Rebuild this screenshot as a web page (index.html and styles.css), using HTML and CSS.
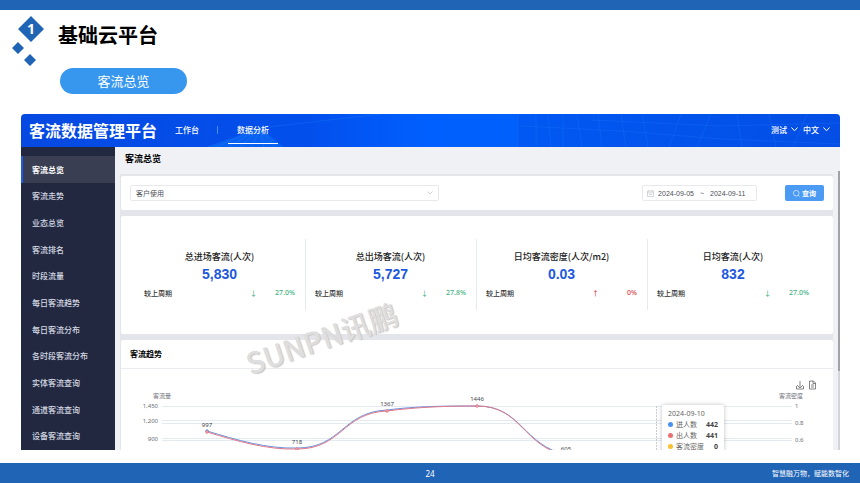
FILE: index.html
```html
<!DOCTYPE html>
<html lang="zh-CN">
<head>
    <meta charset="UTF-8">
    <meta name="viewport" content="width=device-width, initial-scale=1.0">
    <title>基础云平台 - 客流总览</title>
    <link rel="stylesheet" href="styles.css">
</head>
<body>

<header class="slide-header">
    <div class="heading">
        <svg class="diamonds" width="34" height="52" viewBox="0 0 34 52">
            <path d="M20 0L33 13L20 26L7 13Z M7 26L13 32L7 38L1 32Z M19 38L25 44L19 50L13 44Z" fill="#2064b6"/>
            <text x="20" y="18" text-anchor="middle">1</text>
        </svg>
        <h1>基础云平台</h1>
    </div>
    <h2 class="pill">客流总览</h2>
</header>

<div class="app">
    <header class="topbar">
        <svg class="topbar-bg" viewBox="0 0 819 33" preserveAspectRatio="none" aria-hidden="true">
            <path d="M185 33L239 14L263 33Z" fill="#1686ff" opacity=".35"/>
            <path d="M195 33L239 14M207 33L239 14M219 33L239 14M231 33L239 14M243 33L239 14M254 33L239 14M239 14L360 0" stroke="#45b0ff" stroke-width=".5" opacity=".3"/>
            <path d="M497 0H819V33H497Z" fill="#0344d8" opacity=".25"/>
            <path d="M497 0V33M515 0V33M527 0L530 33M542 0V33M556 0L561 33M577 0L581 33M600 0L605 33M621 0L627 33M660 0L648 33M690 0L676 33M716 0L721 33M748 0L755 33M786 0L772 33M500 12L600 17L700 25L819 30M570 6L700 12L819 9" fill="none" stroke="#2f87ff" stroke-width=".6" opacity=".35"/>
        </svg>
        <div class="logo">客流数据管理平台</div>
        <nav class="tabs">
            <a href="#">工作台</a>
            <span class="tab-divider"></span>
            <a href="#" class="active">数据分析</a>
        </nav>
        <div class="user-menu">
            <button type="button">测试 <svg width="7" height="5" viewBox="0 0 7 5"><path d="M.5 .5L3.5 3.8L6.5 .5"/></svg></button>
            <button type="button">中文 <svg width="7" height="5" viewBox="0 0 7 5"><path d="M.5 .5L3.5 3.8L6.5 .5"/></svg></button>
        </div>
    </header>

    <div class="app-body">
        <nav class="sidebar">
            <a href="#" class="active">客流总览</a>
            <a href="#">客流走势</a>
            <a href="#">业态总览</a>
            <a href="#">客流排名</a>
            <a href="#">时段流量</a>
            <a href="#">每日客流趋势</a>
            <a href="#">每日客流分布</a>
            <a href="#">各时段客流分布</a>
            <a href="#">实体客流查询</a>
            <a href="#">通道客流查询</a>
            <a href="#">设备客流查询</a>
        </nav>

        <main class="content">
            <h3 class="page-title">客流总览</h3>

            <div class="cards">
                <form class="card filter">
                    <div class="select-wrap">
                        <select aria-label="客户">
                            <option>客户使用</option>
                        </select>
                        <svg width="6" height="4" viewBox="0 0 6 4"><path d="M.5 .5L3 3L5.5 .5" fill="none" stroke="#b9bdc5" stroke-width=".7"/></svg>
                    </div>
                    <div class="date-range">
                        <svg width="7" height="7" viewBox="0 0 7 7"><path d="M.5 1H6.5V6.5H.5ZM.5 2.8H6.5M2 0V1.8M5 0V1.8M2 4.5H5" fill="none" stroke="#b9bdc5" stroke-width=".6"/></svg>
                        <input type="text" value="2024-09-05" aria-label="开始日期">
                        <span>~</span>
                        <input type="text" value="2024-09-11" aria-label="结束日期">
                    </div>
                    <button type="button" class="btn-query">
                        <svg width="7" height="7" viewBox="0 0 7 7"><path d="M5.3 5.3L6.6 6.6M6 3.2A2.8 2.8 0 1 1 .4 3.2A2.8 2.8 0 1 1 6 3.2Z" fill="none" stroke="#fff" stroke-width=".6"/></svg>
                        查询
                    </button>
                </form>

                <section class="card stats">
                    <div class="stat">
                        <div class="stat-label">总进场客流(人次)</div>
                        <div class="stat-value">5,830</div>
                        <div class="stat-compare"><span>较上周期</span><span class="down">↓</span><span class="rate down">27.0%</span></div>
                    </div>
                    <div class="stat">
                        <div class="stat-label">总出场客流(人次)</div>
                        <div class="stat-value">5,727</div>
                        <div class="stat-compare"><span>较上周期</span><span class="down">↓</span><span class="rate down">27.8%</span></div>
                    </div>
                    <div class="stat">
                        <div class="stat-label">日均客流密度(人次/m2)</div>
                        <div class="stat-value">0.03</div>
                        <div class="stat-compare"><span>较上周期</span><span class="up">↑</span><span class="rate up">0%</span></div>
                    </div>
                    <div class="stat">
                        <div class="stat-label">日均客流(人次)</div>
                        <div class="stat-value">832</div>
                        <div class="stat-compare"><span>较上周期</span><span class="down">↓</span><span class="rate down">27.0%</span></div>
                    </div>
                </section>

                <section class="card trend">
                    <h3>客流趋势</h3>
                    <div class="chart">
                        <svg class="plot" viewBox="0 0 712 100">
                            <g class="grid">
                                <path d="M41 37.5H671M41 51.5H671M41 54.5H671M41 69.5H671M41 71.5H671"/>
                            </g>
                            <path class="pointer" d="M535.5 37V100"/>
                            <g class="axis">
                                <text x="41" y="29" text-anchor="middle">客流量</text>
                                <text x="37" y="39" text-anchor="end">1,450</text>
                                <text x="37" y="54" text-anchor="end">1,200</text>
                                <text x="37" y="72" text-anchor="end">900</text>
                                <text x="670" y="29" text-anchor="middle">客流密度</text>
                                <text x="674" y="39">1</text>
                                <text x="674" y="56">0.8</text>
                                <text x="674" y="73">0.6</text>
                            </g>
                            <path class="line in" d="M86 62C116 71 146 80 176 79C221 79 221 43 266 41C296 37 326 37 356 37C401 37 401 76 446 86"/>
                            <path class="line out" d="M86 63C116 72 146 81 176 80C221 80 221 44 266 42C296 38 326 37 356 37C401 37 401 77 446 87"/>
                            <g class="dots">
                                <circle class="in" cx="86" cy="62" r="1.2"/>
                                <circle cx="86" cy="63" r="1.2"/>
                                <circle cx="176" cy="80" r="1.2"/>
                                <circle cx="266" cy="42" r="1.2"/>
                                <circle cx="356" cy="37" r="1.2"/>
                            </g>
                            <g class="values">
                                <text x="86" y="58">997</text>
                                <text x="176" y="75">718</text>
                                <text x="266" y="37">1367</text>
                                <text x="356" y="32">1446</text>
                                <text x="445" y="82">605</text>
                            </g>
                            <g class="tools">
                                <path d="M679 12V18M676 16L679 19L682 16M675.500 17V20H682.500V17"/>
                                <path d="M688.500 12H692.500L694.500 14V20H688.500ZM692 12V14.500H694.500M690 16H693M690 18H693"/>
                            </g>
                        </svg>
                        <div class="tooltip">
                            <div class="tooltip-date">2024-09-10</div>
                            <div class="tooltip-row"><i class="blue"></i>进人数<b>442</b></div>
                            <div class="tooltip-row"><i class="red"></i>出人数<b>441</b></div>
                            <div class="tooltip-row"><i class="yellow"></i>客流密度<b>0</b></div>
                        </div>
                    </div>
                </section>
            </div>
            <div class="scrollbar"></div>
        </main>
    </div>
    <div class="watermark">SUNPN讯鹏</div>
</div>

<footer class="slide-footer">
    <span class="page-no">24</span>
    <span class="slogan">智慧融万物，赋能数智化</span>
</footer>

</body>
</html>
```

FILE: styles.css
```css
* {
    box-sizing: border-box;
}

body {
    margin: 0;
    height: 100vh;
    display: flex;
    flex-direction: column;
    border-top: 10px solid #2064b6;
    background-color: #fff;
    font-family: "Noto Sans CJK SC", sans-serif;
    overflow: hidden;
}

h1, h2, h3 {
    margin: 0;
}

a {
    color: inherit;
    text-decoration: none;
}

button, input, select {
    font-family: inherit;
    margin: 0;
    padding: 0;
    border: none;
    background: none;
}

/* slide header */
.slide-header {
    padding: 6px 11px 0;
}

.heading {
    display: flex;
    gap: 13px;
    height: 52px;
}

.diamonds text {
    fill: #fff;
    font-family: "Noto Sans", sans-serif;
    font-size: 14px;
    font-weight: bold;
}

.heading h1 {
    font-size: 20px;
    line-height: 38px;
}

.pill {
    width: 127px;
    margin-left: 49px;
    border-radius: 13px;
    background-color: #3797ef;
    color: #fff;
    font-size: 13px;
    font-weight: normal;
    line-height: 26px;
    text-align: center;
}

/* application window */
.app {
    position: relative;
    flex: 1;
    min-height: 0;
    display: flex;
    flex-direction: column;
    margin: 20px 20px 13px 21px;
    border-radius: 4px 4px 0 0;
    overflow: hidden;
}

.topbar {
    position: relative;
    flex: none;
    display: flex;
    align-items: center;
    height: 33px;
    padding: 0 10px 2px 8px;
    background: linear-gradient(90deg, #0649e2, #0450ec 35%, #0060ff 50%, #0060fc 60%, #0452ea);
    color: #fff;
}

.topbar-bg {
    position: absolute;
    inset: 0;
    width: 100%;
    height: 100%;
}

.logo {
    position: relative;
    font-size: 16px;
    font-weight: bold;
}

.tabs {
    position: relative;
    flex: 1;
    display: flex;
    align-items: center;
    height: 100%;
    margin-left: 18px;
    font-size: 8px;
    font-weight: 500;
}

.tabs a {
    height: 28px;
    line-height: 28px;
}

.tabs .active {
    padding: 0 9px;
    border-bottom: 1px solid #fff;
}

.tab-divider {
    width: 1px;
    height: 8px;
    margin: 0 10px 0 18px;
    background-color: #4c8cff;
}

.user-menu {
    position: relative;
    display: flex;
    gap: 5px;
}

.user-menu button {
    display: flex;
    align-items: center;
    gap: 4px;
    color: #fff;
    font-size: 8px;
    font-weight: 500;
}

.user-menu path {
    fill: none;
    stroke: #fff;
}

.app-body {
    flex: 1;
    min-height: 0;
    display: flex;
}

.sidebar {
    flex: none;
    display: flex;
    flex-direction: column;
    width: 94px;
    padding: 9px 0 1px;
    background-color: #222840;
    color: #d3d8e0;
    font-size: 8px;
    font-weight: 500;
}

.sidebar a {
    flex: 1;
    display: flex;
    align-items: center;
    padding-left: 9px;
    border-left: 2px solid transparent;
}

.sidebar .active {
    border-color: #1f5be0;
    background-color: #393e52;
    color: #fff;
    font-weight: bold;
}

.content {
    position: relative;
    flex: 1;
    min-width: 0;
    background-color: #eff1f5;
}

.page-title {
    padding: 0 10px;
    font-size: 9px;
    line-height: 24px;
}

.cards {
    display: flex;
    flex-direction: column;
    gap: 6px;
    margin: 3px 7px 0 5px;
    padding: 2px 0 0 1px;
    background-color: #e3e5ea;
}

.card {
    border-radius: 2px;
    background-color: #fff;
}

.filter {
    display: flex;
    align-items: center;
    height: 34px;
    padding: 0 9px;
    color: #4d5157;
}

.select-wrap {
    display: flex;
    align-items: center;
    width: 309px;
    margin-right: auto;
    padding: 0 5px;
    border: 1px solid #e8e9ec;
    border-radius: 2px;
}

.select-wrap select {
    flex: 1;
    height: 14px;
    appearance: none;
    color: inherit;
    font-size: 7px;
}

.date-range {
    display: flex;
    align-items: center;
    height: 16px;
    margin-right: 28px;
    padding: 0 4px;
    border: 1px solid #e8e9ec;
    border-radius: 2px;
    font-size: 7px;
}

.date-range input {
    width: 42px;
    margin-left: 4px;
    color: inherit;
    font-family: "Liberation Sans", sans-serif;
    font-size: 7px;
}

.date-range span {
    margin-right: 2px;
}

.btn-query {
    display: flex;
    align-items: center;
    justify-content: center;
    gap: 2px;
    width: 39px;
    height: 16px;
    border-radius: 2px;
    background-color: #4b9bf5;
    color: #fff;
    font-size: 7px;
    font-weight: bold;
}

/* key figures */
.stats {
    display: grid;
    grid-template-columns: repeat(4, 1fr);
    padding: 23px 14px 24px;
}

.stat {
    height: 71px;
    padding: 12px 10px 0 9px;
    border-right: 1px solid #e8e9ec;
    text-align: center;
}

.stat:last-child {
    border-right: none;
}

.stat-label {
    color: #222;
    font-size: 9px;
    font-weight: 500;
    line-height: 12px;
}

.stat-value {
    color: #1d58e0;
    font-family: "Liberation Sans", sans-serif;
    font-size: 14px;
    font-weight: bold;
    line-height: 22px;
}

.stat-compare {
    display: flex;
    margin-top: 2px;
    color: #333;
    font-size: 7px;
    font-weight: 500;
    line-height: 12px;
}

.stat-compare span:first-child {
    margin-right: auto;
}

.stat-compare .rate {
    width: 38px;
    font-family: "Noto Sans", sans-serif;
    text-align: right;
}

.down {
    color: #3fb27f;
}

.up {
    color: #d9434b;
}

/* trend chart */
.trend h3 {
    padding: 0 9px;
    border-bottom: 1px solid #e9ecf0;
    font-size: 8px;
    line-height: 28px;
}

.chart {
    position: relative;
}

.plot {
    display: block;
    width: 100%;
    font-family: "Noto Sans", "Noto Sans CJK SC", sans-serif;
}

.plot path {
    fill: none;
}

.grid path {
    stroke: #e3ebf1;
}

.plot .pointer {
    stroke: #c8cbd0;
    stroke-dasharray: 2 1;
}

.axis text {
    fill: #6a6e76;
    font-size: 6px;
}

.line.in {
    stroke: #6c93dc;
}

.line.out {
    stroke: #e0788a;
}

.dots circle {
    fill: #fff;
    stroke: #e0606d;
}

.dots .in {
    stroke: #4a7fe0;
}

.values text {
    fill: #44474d;
    font-size: 6px;
    text-anchor: middle;
}

.tools path {
    stroke: #666;
    stroke-width: .8;
}

.tooltip {
    position: absolute;
    top: 36px;
    left: 76%;
    width: 62px;
    padding: 3px 6px;
    border-radius: 2px;
    background-color: #fff;
    box-shadow: 0 0 4px rgba(0, 0, 0, 0.25);
    color: #666;
    font-family: "Noto Sans", "Noto Sans CJK SC", sans-serif;
    font-size: 7px;
    line-height: 11px;
}

.tooltip-row {
    display: flex;
    align-items: center;
    white-space: nowrap;
}

.tooltip-row i {
    width: 5px;
    height: 5px;
    margin-right: 3px;
    border-radius: 50%;
}

.tooltip-row b {
    margin-left: auto;
    color: #444;
}

.blue {
    background-color: #4a90f0;
}

.red {
    background-color: #ea6f70;
}

.yellow {
    background-color: #fbc02d;
}

.scrollbar {
    position: absolute;
    top: 24px;
    right: 0;
    bottom: 0;
    width: 2px;
    background: linear-gradient(#a0a2a8 200px, #d3d5da 200px);
}

.watermark {
    position: absolute;
    top: 200px;
    left: 221px;
    color: #dededf;
    font-size: 29px;
    font-weight: 500;
    line-height: 46px;
    text-shadow: 1px 1px 1px #c4c4c7;
    transform: rotate(-19deg);
}

/* slide footer */
.slide-footer {
    display: grid;
    grid-template-columns: 1fr auto 1fr;
    align-items: center;
    flex: none;
    height: 20px;
    padding: 0 11px;
    background-color: #2064b6;
    color: #fff;
    font-size: 7px;
}

.page-no {
    grid-column: 2;
    font-family: "Noto Sans", sans-serif;
    font-size: 8px;
}

.slogan {
    text-align: right;
}
```
